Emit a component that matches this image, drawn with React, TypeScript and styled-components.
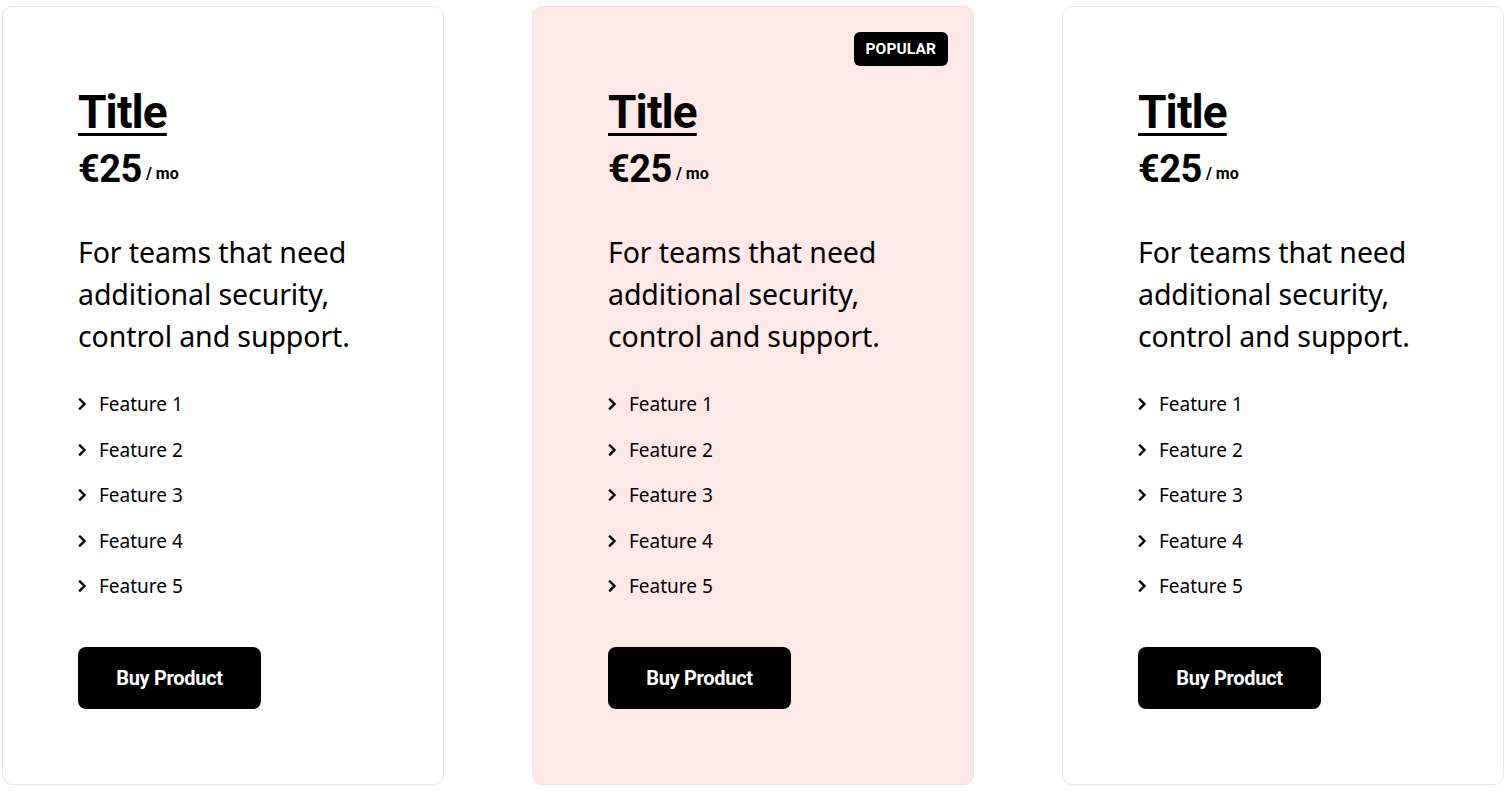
import React from "react";
import styled, { createGlobalStyle } from "styled-components";

const Global = createGlobalStyle`
  html, body { margin: 0; padding: 0; background: #ffffff; }
  body { font-family: "Noto Sans", "Open Sans", sans-serif; color: #000; }
`;

const Page = styled.div`
  display: grid;
  grid-template-columns: repeat(3, 442px);
  column-gap: 88px;
  padding: 6px 4px 6px 2px;
`;

const Card = styled.div<{ $popular?: boolean }>`
  position: relative;
  box-sizing: border-box;
  height: 779px;
  border: 1px solid ${(p) => (p.$popular ? "#f6e0e0" : "#e8e8e8")};
  border-radius: 10px;
  background: ${(p) => (p.$popular ? "#fee8e8" : "#ffffff")};
  padding: 77px 40px 75px 75px;
  display: flex;
  flex-direction: column;
`;

const Badge = styled.span`
  position: absolute;
  top: 25px;
  right: 25px;
  background: #000;
  color: #fff;
  font-family: Roboto, "Liberation Sans", sans-serif;
  font-weight: 700;
  font-size: 15.5px;
  letter-spacing: 0.1px;
  padding: 0 12px;
  height: 34px;
  line-height: 34px;
  border-radius: 6px;
`;

const Title = styled.h2`
  margin: 0;
  font-family: Roboto, "Liberation Sans", sans-serif;
  font-weight: 700;
  font-size: 46px;
  line-height: 56px;
  letter-spacing: -0.9px;
  text-decoration: underline;
  text-decoration-thickness: 3px;
  text-underline-offset: 5px;
  align-self: flex-start;
`;

const Price = styled.div`
  margin-top: 7px;
  display: flex;
  align-items: flex-end;
  gap: 4px;
  font-family: Roboto, "Liberation Sans", sans-serif;
  font-weight: 700;
`;

const Amount = styled.span`
  font-size: 38px;
  line-height: 44px;
  letter-spacing: -0.5px;
`;

const Per = styled.span`
  font-size: 16px;
  line-height: 16px;
  padding-bottom: 9px;
`;

const Desc = styled.p`
  margin: 40px 0 0;
  font-family: "Noto Sans", sans-serif;
  font-size: 28.5px;
  line-height: 42px;
  font-weight: 400;
  letter-spacing: -0.1px;
`;

const Features = styled.ul`
  list-style: none;
  margin: 34px 0 0;
  padding: 0;
  display: flex;
  flex-direction: column;
  gap: 19.5px;
`;

const Feature = styled.li`
  display: flex;
  align-items: center;
  gap: 12px;
  font-family: "Noto Sans", sans-serif;
  font-size: 19px;
  line-height: 26px;
`;

const Chevron = styled.svg`
  width: 9px;
  height: 12px;
  flex: none;
`;

const Button = styled.button`
  margin-top: 48px;
  align-self: flex-start;
  width: 183px;
  height: 62px;
  border: none;
  border-radius: 8px;
  background: #000;
  color: #fff;
  font-family: Roboto, "Liberation Sans", sans-serif;
  font-weight: 700;
  font-size: 20px;
  letter-spacing: -0.3px;
  cursor: pointer;
`;

const features = ["Feature 1", "Feature 2", "Feature 3", "Feature 4", "Feature 5"];

function Plan({ popular }: { popular?: boolean }) {
  return (
    <Card $popular={popular}>
      {popular && <Badge>POPULAR</Badge>}
      <Title>Title</Title>
      <Price>
        <Amount>€25</Amount>
        <Per>/ mo</Per>
      </Price>
      <Desc>
        For teams that need additional security, control and support.
      </Desc>
      <Features>
        {features.map((f) => (
          <Feature key={f}>
            <Chevron viewBox="0 0 9 12">
              <path d="M2 1.5 L6.5 6 L2 10.5" fill="none" stroke="#000" strokeWidth="2.4" strokeLinecap="square" />
            </Chevron>
            {f}
          </Feature>
        ))}
      </Features>
      <Button>Buy Product</Button>
    </Card>
  );
}

export default function App() {
  return (
    <>
      <Global />
      <Page>
        <Plan />
        <Plan popular />
        <Plan />
      </Page>
    </>
  );
}
